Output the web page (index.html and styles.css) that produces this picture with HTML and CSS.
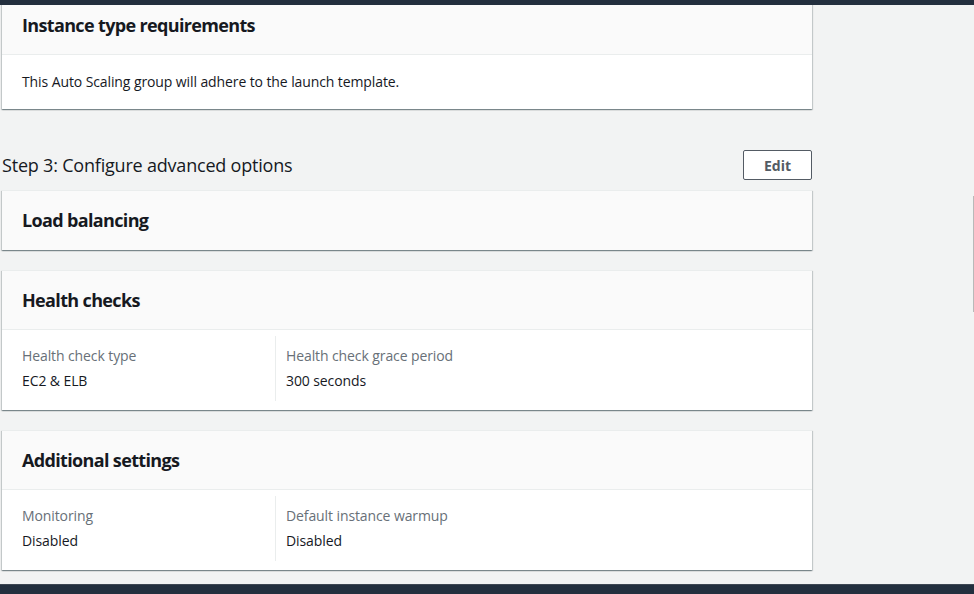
FILE: index.html
```html
<!DOCTYPE html>
<html lang="en">
<head>
<meta charset="utf-8">
<title>Review</title>
<link rel="stylesheet" href="styles.css">
</head>
<body>
<div class="topbar"></div>
<main class="content">
  <section class="card card-first">
    <div class="card-header"><h2>Instance type requirements</h2></div>
    <div class="card-body text-body">This Auto Scaling group will adhere to the launch template.</div>
  </section>

  <div class="step-head">
    <h1>Step 3: Configure advanced options</h1>
    <button class="btn">Edit</button>
  </div>

  <section class="card">
    <div class="card-header only"><h2>Load balancing</h2></div>
  </section>

  <section class="card">
    <div class="card-header"><h2>Health checks</h2></div>
    <div class="card-body cols">
      <div class="col">
        <div class="label">Health check type</div>
        <div class="value">EC2 &amp; ELB</div>
      </div>
      <div class="col">
        <div class="label">Health check grace period</div>
        <div class="value">300 seconds</div>
      </div>
    </div>
  </section>

  <section class="card">
    <div class="card-header"><h2>Additional settings</h2></div>
    <div class="card-body cols">
      <div class="col">
        <div class="label">Monitoring</div>
        <div class="value">Disabled</div>
      </div>
      <div class="col">
        <div class="label">Default instance warmup</div>
        <div class="value">Disabled</div>
      </div>
    </div>
  </section>
</main>
<div class="scroll-thumb"></div>
<div class="footer"></div>
</body>
</html>
```

FILE: styles.css
```css
* { box-sizing: border-box; }
html, body { margin: 0; padding: 0; }
body {
  background: #f2f3f3;
  font-family: "Open Sans", "Noto Sans", sans-serif;
  color: #16191f;
  font-size: 14px;
  line-height: 22px;
  letter-spacing: -0.1px;
  overflow: hidden;
  height: 594px;
}
.topbar {
  position: fixed;
  top: 0; left: 0; right: 0;
  height: 5px;
  background: #232f3e;
  z-index: 10;
}
.footer {
  position: fixed;
  left: 0; right: 0; bottom: 0;
  height: 10px;
  background: #232f3e;
  border-top: 1px solid #3e4753;
  z-index: 10;
}
.scroll-thumb {
  position: fixed;
  right: 0;
  top: 196px;
  width: 1px;
  height: 116px;
  background: #b9b9b9;
}
.content {
  width: 810px;
  margin-left: 2px;
}
.card {
  background: #fff;
  border-top: 1px solid #eaeded;
  box-shadow: 0 1px 1px 0 rgba(0,28,36,.3), 1px 1px 1px 0 rgba(0,28,36,.15), -1px 1px 1px 0 rgba(0,28,36,.15);
  margin-bottom: 20px;
}
.card-first { margin-top: -5px; }
.card-header {
  background: #fafafa;
  border-bottom: 1px solid #eaeded;
  padding: 18px 20px;
}
.card-header.only {
  border-bottom: none;
  padding: 18px 20px 19px;
}
.card-header h2 {
  margin: 0;
  font-size: 18px;
  line-height: 22px;
  font-weight: 700;
  letter-spacing: -0.65px;
}
.text-body {
  padding: 16px 20px;
}
.cols {
  display: grid;
  grid-template-columns: 253px 253px;
  padding: 6px 20px 9px;
}
.col {
  padding: 9px 0;
}
.col + .col {
  border-left: 1px solid #eaeded;
  padding-left: 10px;
}
.label { color: #687078; }
.value { margin-top: 3px; }
.step-head {
  display: flex;
  align-items: center;
  justify-content: space-between;
  padding-top: 21px;
  margin-bottom: 10px;
}
.step-head h1 {
  margin: 0;
  font-size: 18px;
  font-weight: 400;
  line-height: 30px;
  letter-spacing: -0.2px;
}
.btn {
  width: 69px;
  height: 30px;
  background: #fff;
  border: 1px solid #545b64;
  border-radius: 2px;
  color: #545b64;
  font-family: inherit;
  font-size: 14px;
  font-weight: 700;
  letter-spacing: 0;
  padding: 0;
}
```
